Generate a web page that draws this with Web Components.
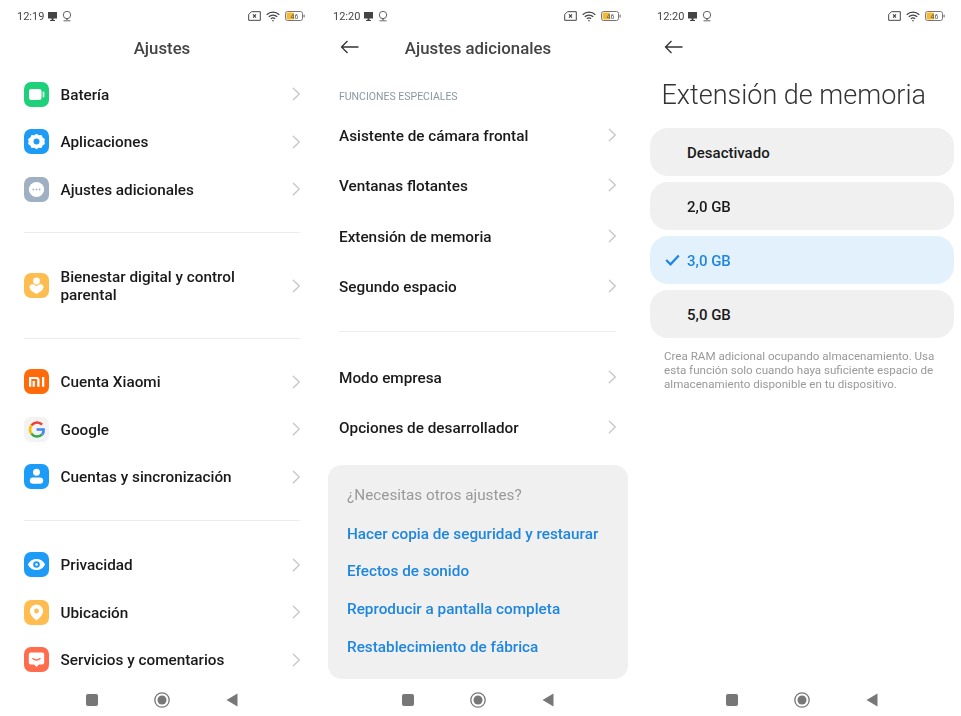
<!DOCTYPE html>
<html lang="es">
<head>
<meta charset="utf-8">
<title>Ajustes</title>
<style>
  html, body { margin: 0; padding: 0; background: #fff; }
  body { display: flex; width: 961px; height: 716px; overflow: hidden; font-family: Roboto, "Liberation Sans", sans-serif; }
</style>
</head>
<body>
<phone-screen style="--w:316px" time="12:19">
  <page-title>Ajustes</page-title>
  <setting-row icon="battery" top>Batería</setting-row>
  <setting-row icon="apps">Aplicaciones</setting-row>
  <setting-row icon="more">Ajustes adicionales</setting-row>
  <row-divider></row-divider>
  <setting-row icon="wellbeing" tall>Bienestar digital y control parental</setting-row>
  <row-divider></row-divider>
  <setting-row icon="mi">Cuenta Xiaomi</setting-row>
  <setting-row icon="google">Google</setting-row>
  <setting-row icon="account">Cuentas y sincronización</setting-row>
  <row-divider loose></row-divider>
  <setting-row icon="privacy">Privacidad</setting-row>
  <setting-row icon="location">Ubicación</setting-row>
  <setting-row icon="feedback">Servicios y comentarios</setting-row>
</phone-screen>

<phone-screen style="--w:324px" time="12:20">
  <page-title back>Ajustes adicionales</page-title>
  <section-label>FUNCIONES ESPECIALES</section-label>
  <plain-row>Asistente de cámara frontal</plain-row>
  <plain-row>Ventanas flotantes</plain-row>
  <plain-row>Extensión de memoria</plain-row>
  <plain-row>Segundo espacio</plain-row>
  <row-divider inset></row-divider>
  <plain-row>Modo empresa</plain-row>
  <plain-row>Opciones de desarrollador</plain-row>
  <help-card heading="¿Necesitas otros ajustes?">
    <a>Hacer copia de seguridad y restaurar</a>
    <a>Efectos de sonido</a>
    <a>Reproducir a pantalla completa</a>
    <a>Restablecimiento de fábrica</a>
  </help-card>
</phone-screen>

<phone-screen style="--w:321px" time="12:20">
  <big-title>Extensión de memoria</big-title>
  <option-pill>Desactivado</option-pill>
  <option-pill>2,0 GB</option-pill>
  <option-pill selected>3,0 GB</option-pill>
  <option-pill>5,0 GB</option-pill>
  <hint-text>Crea RAM adicional ocupando almacenamiento. Usa esta función solo cuando haya suficiente espacio de almacenamiento disponible en tu dispositivo.</hint-text>
</phone-screen>

<script>
const CHEVRON = `<svg width="10" height="14" viewBox="0 0 10 14" fill="none" stroke="#c6c6c6" stroke-width="1.3" stroke-linecap="round" stroke-linejoin="round"><path d="M2.300 1.200 8.300 7 2.300 12.800"/></svg>`;

const BACK = `<svg class="back" width="20" height="14" viewBox="0 0 20 14" fill="none" stroke="#333" stroke-width="1.300"><path d="M18.500 7H1.500M7.500 1 1.500 7l6 6"/></svg>`;

const ICONS = {
  battery: `<rect width="25" height="25" rx="7" fill="#1fd07a"/><rect x="5" y="7" width="12.500" height="11" rx="2.200" fill="#fff"/><rect x="18.600" y="9.600" width="1.800" height="5.800" rx=".9" fill="#fff" opacity=".85"/>`,
  apps: `<rect width="25" height="25" rx="7" fill="#1c9bf7"/><path d="M12.500 4.800l2.300 1.400 2.700-.1 1.200 2.400 2.200 1.500-.5 2.500.5 2.500-2.200 1.400-1.200 2.500-2.700-.1-2.300 1.400-2.300-1.400-2.700.1-1.200-2.500-2.200-1.400.5-2.500-.5-2.500 2.200-1.500 1.200-2.400 2.700.1z" fill="#fff"/><circle cx="12.500" cy="12.500" r="3" fill="#1c9bf7"/>`,
  more: `<rect width="25" height="25" rx="7" fill="#9fb0c2"/><circle cx="12.500" cy="12.500" r="7.600" fill="#fff"/><circle cx="9.400" cy="12.500" r=".9" fill="#9fb0c2"/><circle cx="12.500" cy="12.500" r=".9" fill="#9fb0c2"/><circle cx="15.600" cy="12.500" r=".9" fill="#9fb0c2"/>`,
  wellbeing: `<rect width="25" height="25" rx="7" fill="#ffbd4f"/><circle cx="12.500" cy="8" r="3.400" fill="#fff"/><path d="M12.500 21c-3.400-1.500-7-4-7-6.900 0-1.700 1.300-2.800 2.800-2.800 1.600 0 3 .9 4.200 2.200 1.200-1.300 2.600-2.200 4.200-2.200 1.500 0 2.800 1.100 2.800 2.800 0 2.900-3.600 5.400-7 6.900z" fill="#fff"/>`,
  mi: `<rect width="25" height="25" rx="7" fill="#ff6a0a"/><path d="M5 8h7.400c2 0 3.100 1.200 3.100 3.100v6.600h-2.300v-6.500c0-.7-.4-1.100-1.100-1.100H7.300v7.600H5zM8.600 12h2.300v5.700H8.600zM18 8h2.300v9.700H18z" fill="#fff"/>`,
  google: `<rect width="25" height="25" rx="7" fill="#f3f3f3"/><g fill="none" stroke-width="2.600"><path d="M18.200 7.700A7.100 7.100 0 0 0 7.500 8.300" stroke="#ea4335"/><path d="M7.500 8.300a7.100 7.100 0 0 0 0 8.400" stroke="#fbbc05"/><path d="M7.500 16.700a7.100 7.100 0 0 0 10.700.700" stroke="#34a853"/><path d="M18.200 17.400a7.100 7.100 0 0 0 1.400-4.900h-7" stroke="#4285f4"/></g>`,
  account: `<rect width="25" height="25" rx="7" fill="#1c9bf7"/><circle cx="12.500" cy="8.300" r="3.500" fill="#fff"/><rect x="5.800" y="13.400" width="13.400" height="6.400" rx="3.200" fill="#fff"/>`,
  privacy: `<rect width="25" height="25" rx="7" fill="#1c9bf7"/><path d="M3.800 12.500c2-3.700 5.100-5.500 8.700-5.500s6.700 1.800 8.700 5.500c-2 3.700-5.100 5.500-8.700 5.500s-6.700-1.800-8.700-5.500z" fill="#fff"/><circle cx="12.500" cy="12.500" r="3.300" fill="#1c9bf7"/><circle cx="12.500" cy="12.500" r="1.300" fill="#fff"/>`,
  location: `<rect width="25" height="25" rx="7" fill="#ffbd4f"/><path d="M12.500 4.500a6.600 6.600 0 0 1 6.600 6.600c0 3.700-3.500 7.100-6.600 9.400-3.100-2.300-6.600-5.700-6.600-9.400a6.600 6.600 0 0 1 6.600-6.600z" fill="#fff"/><circle cx="12.500" cy="11" r="2.400" fill="#ffbd4f"/>`,
  feedback: `<rect width="25" height="25" rx="7" fill="#ff6d4d"/><path d="M6.800 5.600h11.400a2 2 0 0 1 2 2v8a2 2 0 0 1-2 2h-3.300l-2.400 2.500-2.400-2.500H6.800a2 2 0 0 1-2-2v-8a2 2 0 0 1 2-2z" fill="#fff"/><path d="M9 11.500c1.800 1.900 5.200 1.900 7 0" fill="none" stroke="#ff6d4d" stroke-width="1.500" stroke-linecap="round"/>`
};

class StatusBar extends HTMLElement {
  constructor() {
    super();
    this.attachShadow({ mode: "open" }).innerHTML = `
      <style>
        :host { display: flex; align-items: center; height: 32px; padding: 0 19px 0 17px; color: #454545; font-size: 11px; }
        .time { margin-right: 3px; }
        .right { margin-left: auto; display: flex; align-items: center; gap: 5px; }
        svg { display: block; }
      </style>
      <span class="time"><slot></slot></span>
      <svg width="11" height="11" viewBox="0 0 11 11" fill="#444"><path d="M1 1h9v6.500H1zM4.500 7.500h2V9H8v1H3V9h1.500z"/></svg>
      <svg width="12" height="12" viewBox="0 0 12 12" fill="none" stroke="#555" stroke-width=".9" style="margin-left:3px"><circle cx="6" cy="5" r="3.700"/><path d="M2.500 10.800h7"/><path d="M4.800 8.700 6 9.600 7.200 8.700"/></svg>
      <div class="right">
        <svg width="13" height="10" viewBox="0 0 13 10" fill="none" stroke="#444" stroke-width="1"><path d="M3.500.7h8.800v8.600H.7V3.500z"/><path d="M5 3.300l3 3.400M8 3.300 5 6.700" stroke-width="1.200"/></svg>
        <svg width="14" height="11" viewBox="0 0 14 11" fill="none" stroke="#444" stroke-width="1.200"><path d="M.7 3.700a9 9 0 0 1 12.600 0"/><path d="M2.800 5.800a6 6 0 0 1 8.400 0"/><path d="M4.900 7.900a3 3 0 0 1 4.200 0"/><circle cx="7" cy="9.700" r=".8" fill="#444" stroke="none"/></svg>
        <svg width="20" height="10" viewBox="0 0 20 10" fill="none"><rect x=".5" y=".5" width="17" height="9" rx="2" stroke="#777"/><rect x="1.500" y="1.500" width="7.500" height="7" rx="1" fill="#f5b93a"/><rect x="18.500" y="3.500" width="1.200" height="3" rx=".6" fill="#777"/><text x="5.500" y="7.800" font-size="7" font-family="Roboto, sans-serif" fill="#555">46</text></svg>
      </div>`;
  }
}
customElements.define("status-bar", StatusBar);

class NavBar extends HTMLElement {
  constructor() {
    super();
    this.attachShadow({ mode: "open" }).innerHTML = `
      <style>
        :host { display: flex; align-items: center; justify-content: center; gap: 54px; height: 32px; flex: none; }
        svg { display: block; }
      </style>
      <svg width="16" height="16" viewBox="0 0 16 16"><rect x="2" y="2" width="12" height="12" rx="2" fill="#777"/></svg>
      <svg width="16" height="16" viewBox="0 0 16 16"><circle cx="8" cy="8" r="7.200" fill="none" stroke="#777" stroke-width="1.300"/><circle cx="8" cy="8" r="4.500" fill="#777"/></svg>
      <svg width="16" height="16" viewBox="0 0 16 16"><path d="M13.500 1.500v13L2.500 8z" fill="#777"/></svg>`;
  }
}
customElements.define("nav-bar", NavBar);

class PhoneScreen extends HTMLElement {
  constructor() {
    super();
    const shadow = this.attachShadow({ mode: "open" });
    shadow.innerHTML = `
      <style>
        :host { display: block; flex: none; width: var(--w); height: 716px; overflow: hidden; background: #fff; color: #111; }
        /* the source screenshots are soft, this takes the edge off */
        .frame { width: 324px; height: 716px; display: flex; flex-direction: column; filter: blur(.35px); }
        main { flex: 1; min-height: 0; overflow: hidden; }
      </style>
      <div class="frame">
        <status-bar></status-bar>
        <main><slot></slot></main>
        <nav-bar></nav-bar>
      </div>`;
    shadow.querySelector("status-bar").textContent = this.getAttribute("time");
  }
}
customElements.define("phone-screen", PhoneScreen);

class PageTitle extends HTMLElement {
  constructor() {
    super();
    const arrow = this.hasAttribute("back") ? BACK : "";
    this.attachShadow({ mode: "open" }).innerHTML = `
      <style>
        :host { display: block; position: relative; height: 32px; line-height: 32px; text-align: center; font-size: 16.800px; font-weight: 500; color: #444; }
        .back { position: absolute; left: 24px; top: 8px; }
      </style>
      ${arrow}<slot></slot>`;
  }
}
customElements.define("page-title", PageTitle);

class SettingRow extends HTMLElement {
  constructor() {
    super();
    const name = this.getAttribute("icon");
    this.attachShadow({ mode: "open" }).innerHTML = `
      <style>
        :host { display: flex; align-items: center; height: 47.500px; padding: 0 23px 0 24px; font-size: 15.300px; font-weight: 500; line-height: 18px; color: #1a1a1a; }
        :host([top]) { margin-top: 6.500px; }
        :host([tall]) { height: 67px; }
        .icon { flex: none; display: block; margin-right: 11.500px; }
        .label { flex: 1; padding: 1px 40px 0 0; }
      </style>
      <svg class="icon" width="25" height="25" viewBox="0 0 25 25">${ICONS[name]}</svg>
      <span class="label"><slot></slot></span>
      ${CHEVRON}`;
  }
}
customElements.define("setting-row", SettingRow);

class RowDivider extends HTMLElement {
  constructor() {
    super();
    this.attachShadow({ mode: "open" }).innerHTML = `
      <style>
        :host { display: block; height: 1px; margin: 19px 24px; background: #ececec; }
        :host([loose]) { margin-bottom: 20.600px; }
        :host([inset]) { margin: 18.600px 24px 20.100px 23px; }
      </style>`;
  }
}
customElements.define("row-divider", RowDivider);

class SectionLabel extends HTMLElement {
  constructor() {
    super();
    this.attachShadow({ mode: "open" }).innerHTML = `
      <style>
        :host { display: block; margin-top: 22px; height: 24.600px; line-height: 22px; padding-left: 23px; font-size: 10.500px; color: #8c96a3; }
      </style>
      <slot></slot>`;
  }
}
customElements.define("section-label", SectionLabel);

class PlainRow extends HTMLElement {
  constructor() {
    super();
    this.attachShadow({ mode: "open" }).innerHTML = `
      <style>
        :host { display: flex; align-items: center; justify-content: space-between; height: 50.500px; padding: 0 23px; font-size: 15.300px; font-weight: 500; color: #1a1a1a; }
        svg { margin-top: -2px; }
      </style>
      <slot></slot>${CHEVRON}`;
  }
}
customElements.define("plain-row", PlainRow);

class HelpCard extends HTMLElement {
  constructor() {
    super();
    this.attachShadow({ mode: "open" }).innerHTML = `
      <style>
        :host { display: flex; flex-direction: column; margin: 11.600px 12px 0; height: 214px; box-sizing: border-box; padding: 11px 19px 0; background: #f0f0f0; border-radius: 14px; }
        .heading { height: 40px; line-height: 38px; font-size: 15.300px; color: #999; }
        .links { display: flex; flex-direction: column; color: #1e86de; font-size: 15.300px; font-weight: 500; }
        ::slotted(a) { display: block; height: 37.600px; line-height: 37.600px; white-space: nowrap; }
      </style>
      <div class="heading">${this.getAttribute("heading")}</div>
      <div class="links"><slot></slot></div>`;
  }
}
customElements.define("help-card", HelpCard);

class BigTitle extends HTMLElement {
  constructor() {
    super();
    this.attachShadow({ mode: "open" }).innerHTML = `
      <style>
        :host { display: block; position: relative; height: 96px; box-sizing: border-box; padding: 38px 0 0 21.500px; font-size: 27px; line-height: 50px; font-weight: 300; color: #333; white-space: nowrap; }
        .back { position: absolute; left: 24px; top: 8px; }
      </style>
      ${BACK}
      <slot></slot>`;
  }
}
customElements.define("big-title", BigTitle);

class OptionPill extends HTMLElement {
  constructor() {
    super();
    this.attachShadow({ mode: "open" }).innerHTML = `
      <style>
        :host { display: flex; align-items: center; position: relative; height: 48px; margin: 0 10px 6px; padding: 1px 0 0 37px; box-sizing: border-box; background: #f0f0f0; border-radius: 18px; font-size: 15px; font-weight: 500; color: #1a1a1a; }
        :host([selected]) { background: #e3f1fd; color: #1e86de; }
        svg { display: none; position: absolute; left: 15px; top: 18px; }
        :host([selected]) svg { display: block; }
      </style>
      <svg width="15" height="12" viewBox="0 0 15 12" fill="none" stroke="#1e86de" stroke-width="2.200"><path d="M1.200 6l4.300 4.300L13.800 1.500"/></svg>
      <slot></slot>`;
  }
}
customElements.define("option-pill", OptionPill);

class HintText extends HTMLElement {
  constructor() {
    super();
    this.attachShadow({ mode: "open" }).innerHTML = `
      <style>
        :host { display: block; margin-top: 11px; padding: 0 15px 0 24px; font-size: 11.600px; line-height: 14px; color: #999; }
      </style>
      <slot></slot>`;
  }
}
customElements.define("hint-text", HintText);
</script>
</body>
</html>
